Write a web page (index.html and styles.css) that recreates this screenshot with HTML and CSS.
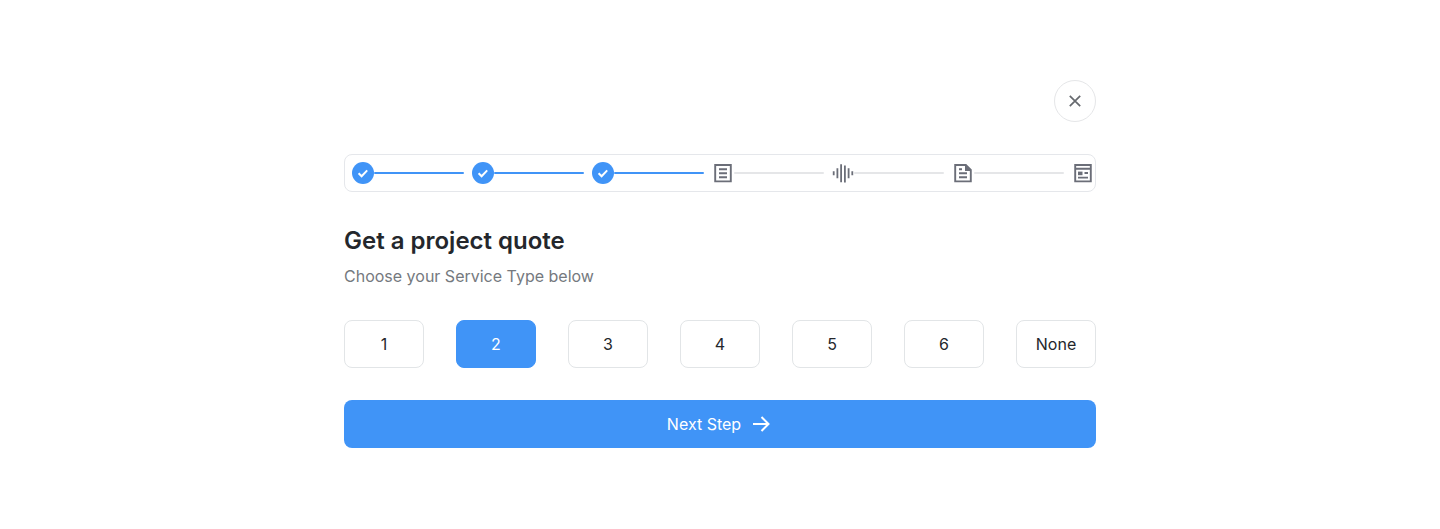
FILE: index.html
```html
<!DOCTYPE html>
<html lang="en">
<head>
<meta charset="utf-8">
<meta name="viewport" content="width=device-width, initial-scale=1">
<title>Get a project quote</title>
<link rel="stylesheet" href="styles.css">
</head>
<body>
<main class="quote">
  <button class="close" type="button" aria-label="Close">
    <svg viewBox="0 0 20 20" width="20" height="20" aria-hidden="true"><path d="M4.8 4.8l10.4 10.4M15.2 4.8L4.8 15.2" fill="none" stroke="currentColor" stroke-width="1.7"/></svg>
  </button>

  <ol class="steps">
    <li class="step done"><svg class="step-icon" viewBox="1 1 22 22" aria-hidden="true"><circle cx="12" cy="12" r="11"/><path class="tick" d="M7.6 12.2l3 3 5.6-5.8"/></svg></li>
    <li class="step done"><svg class="step-icon" viewBox="1 1 22 22" aria-hidden="true"><circle cx="12" cy="12" r="11"/><path class="tick" d="M7.6 12.2l3 3 5.6-5.8"/></svg></li>
    <li class="step done"><svg class="step-icon" viewBox="1 1 22 22" aria-hidden="true"><circle cx="12" cy="12" r="11"/><path class="tick" d="M7.6 12.2l3 3 5.6-5.8"/></svg></li>
    <li class="step"><svg class="step-icon line-icon" viewBox="1 1 22 22" aria-hidden="true"><path d="M4.2 4h15.6v16.4H4.2zM8 8.2h8M8 12.2h8M8 16.2h8"/></svg></li>
    <li class="step"><svg class="step-icon line-icon wave" viewBox="1 1 22 22" aria-hidden="true"><path d="M2.7 10.2v4M6.4 7.2v10M10.1 3.2v18M13.9 4.6v17M17.6 7.2v10M21.3 10.2v4"/></svg></li>
    <li class="step"><svg class="step-icon line-icon" viewBox="1 1 22 22" aria-hidden="true"><path d="M4.2 4h10.6l5 5v11.4H4.2zM8 8.2h3M8 12.2h8M8 16.2h8"/><path class="fold" d="M14 4l6 6h-6z"/></svg></li>
    <li class="step"><svg class="step-icon line-icon" viewBox="1 1 22 22" aria-hidden="true"><path d="M4.2 4h15.6v16.4H4.2zM4.2 7.8h15.6M13.5 12H17M7 16.6h10"/><path class="fold" d="M7 10.6h4.5v3.6H7z"/></svg></li>
  </ol>

  <h1 class="title">Get a project quote</h1>
  <p class="subtitle">Choose your Service Type below</p>

  <div class="options">
    <button class="option" type="button">1</button>
    <button class="option selected" type="button" aria-pressed="true">2</button>
    <button class="option" type="button">3</button>
    <button class="option" type="button">4</button>
    <button class="option" type="button">5</button>
    <button class="option" type="button">6</button>
    <button class="option" type="button">None</button>
  </div>

  <button class="next" type="button">Next Step
    <svg viewBox="0 0 24 24" width="24" height="24" aria-hidden="true"><path d="M4 12h15M12.5 5l7 7-7 7" fill="none" stroke="currentColor" stroke-width="2"/></svg>
  </button>
</main>
</body>
</html>
```
FILE: styles.css
```css
* {
  box-sizing: border-box;
}

body {
  margin: 0;
  background: #fff;
  color: #24272c;
  font-family: Inter, "Liberation Sans", sans-serif;
  font-size: 16px;
  line-height: 24px;
}

button {
  font: inherit;
  color: inherit;
  cursor: pointer;
}

.quote {
  display: flex;
  flex-direction: column;
  max-width: 784px;
  margin: 0 auto;
  padding: 80px 16px;
}

.close {
  display: flex;
  align-items: center;
  justify-content: center;
  align-self: flex-end;
  width: 42px;
  height: 42px;
  padding: 0;
  border: 1px solid #e5e6e8;
  border-radius: 50%;
  background: #fff;
  color: #66696e;
}

.steps {
  display: flex;
  margin: 32px 0;
  padding: 7px 1px 7px 7px;
  border: 1px solid #e5e7eb;
  border-radius: 8px;
  list-style: none;
}

.step {
  display: flex;
  flex: 1;
  align-items: center;
}

.step:last-child {
  flex: none;
}

.step:not(:last-child)::after {
  content: "";
  flex: 1;
  height: 2px;
  margin-right: 8px;
  border-radius: 1px;
  background: #e5e6e8;
}

.step.done::after {
  background: #4094f7;
}

.step-icon {
  flex: none;
  width: 22px;
  height: 22px;
  fill: #4094f7;
}

.tick {
  fill: none;
  stroke: #fff;
  stroke-width: 2;
}

.line-icon {
  fill: none;
  stroke: #6b6e78;
  stroke-width: 1.9;
}

.wave {
  stroke-width: 1.8;
}

.fold {
  fill: #6b6e78;
  stroke: none;
}

.title {
  margin: 0;
  font-size: 24px;
  font-weight: 600;
  line-height: 34px;
}

.subtitle {
  margin: 6px 0 32px;
  color: #75797e;
}

.options {
  display: grid;
  grid-template-columns: repeat(7, 1fr);
  gap: 32px;
  margin-bottom: 32px;
}

.option {
  height: 48px;
  padding: 0;
  border: 1px solid #e2e5e7;
  border-radius: 8px;
  background: #fff;
}

.option.selected {
  border-color: #4094f7;
  background: #4094f7;
  color: #fff;
}

.next {
  display: flex;
  align-items: center;
  justify-content: center;
  gap: 8px;
  height: 48px;
  border: 0;
  border-radius: 8px;
  background: #4094f7;
  color: #fff;
}
```
